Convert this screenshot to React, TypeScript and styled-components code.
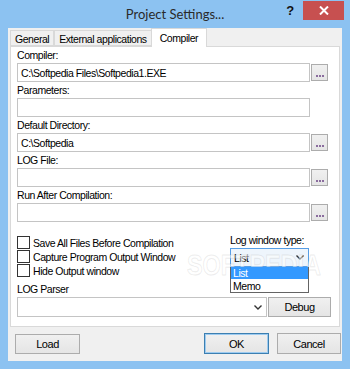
import React from "react";
import styled, { createGlobalStyle } from "styled-components";

const Global = createGlobalStyle`
  html, body { margin: 0; padding: 0; background: #8cc2f1; overflow: hidden; }
  * { box-sizing: border-box; }
  body { font-family: "Liberation Sans", Arial, sans-serif; font-size: 10.5px; letter-spacing: -0.45px; color: #000; }
`;

const Window = styled.div`
  width: 350px;
  height: 369px;
  background: #8cc2f1;
  display: flex;
  flex-direction: column;
  padding: 0 8px 8px 8px;
  overflow: hidden;
`;

const TitleBar = styled.div`
  position: relative;
  height: 28px;
  flex: none;
  display: flex;
  align-items: center;
  justify-content: center;
`;

const Title = styled.div`
  font-family: Lato, "Noto Sans", sans-serif;
  font-size: 13px;
  letter-spacing: 0;
  color: #2a2a2a;
  margin-top: -1px;
`;

const Caption = styled.div`
  position: absolute;
  right: -8px;
  top: 0;
  display: flex;
  align-items: flex-start;
`;

const HelpBtn = styled.div`
  width: 26px;
  height: 20px;
  display: flex;
  align-items: center;
  justify-content: center;
  font-family: "Liberation Sans", Arial, sans-serif;
  font-weight: bold;
  font-size: 13px;
  color: #111;
`;

const CloseBtn = styled.div`
  width: 41px;
  height: 19px;
  margin-right: 6px;
  margin-top: 1px;
  background: #c75050;
  display: flex;
  align-items: center;
  justify-content: center;
`;

const Client = styled.div`
  flex: 1;
  background: #f0f0f0;
  display: flex;
  flex-direction: column;
  padding: 2px 2px 0 2px;
`;

const TabStrip = styled.div`
  display: flex;
  align-items: flex-end;
  height: 16px;
  position: relative;
  z-index: 1;
`;

const Tab = styled.div<{ $active?: boolean }>`
  height: ${(p) => (p.$active ? "19px" : "16px")};
  padding: 0 ${(p) => (p.$active ? "8px" : "4px")};
  margin-left: ${(p) => (p.$active ? "-1px" : "0")};
  margin-bottom: ${(p) => (p.$active ? "-1px" : "0")};
  background: ${(p) => (p.$active ? "#fff" : "#f0f0f0")};
  border: 1px solid #d9d9d9;
  border-bottom: ${(p) => (p.$active ? "none" : "1px solid #d9d9d9")};
  & + & { border-left: ${(p) => (p.$active ? "1px solid #d9d9d9" : "none")}; }
  display: flex;
  align-items: center;
  padding-top: ${(p) => (p.$active ? "0" : "1px")};
  white-space: nowrap;
`;

const Panel = styled.div`
  background: #fff;
  border: 1px solid #d9d9d9;
  height: 281px;
  padding: 2px 0 0 6px;
  display: flex;
  flex-direction: column;
  gap: 2px;
  position: relative;
  overflow: hidden;
`;

const Field = styled.div<{ $top?: number }>`
  display: flex;
  flex-direction: column;
  gap: 1px;
  margin-top: ${(p) => p.$top ?? 0}px;
`;

const Label = styled.div`
  line-height: 13px;
  height: 13px;
  white-space: nowrap;
`;

const Row = styled.div`
  display: flex;
  align-items: center;
  gap: 1px;
`;

const TextBox = styled.div<{ $w?: number }>`
  width: ${(p) => p.$w ?? 293}px;
  height: 19px;
  border: 1px solid #c4c4c4;
  background: #fff;
  padding: 0 3px;
  display: flex;
  align-items: center;
  white-space: nowrap;
`;

const DotsBtn = styled.div`
  width: 17px;
  height: 17px;
  border: 1px solid #acacac;
  background: linear-gradient(#f0f0f0, #e5e5e5);
  display: flex;
  align-items: flex-end;
  justify-content: center;
  padding-bottom: 3px;
  gap: 1px;
`;

const Dot = styled.span`
  width: 2px;
  height: 2px;
  background: #8a6c9e;
`;

const Middle = styled.div`
  display: flex;
  margin-top: 10px;
`;

const Checks = styled.div`
  display: flex;
  flex-direction: column;
  gap: 1px;
  width: 213px;
  padding-top: 2px;
`;

const CheckRow = styled.div`
  display: flex;
  align-items: center;
  gap: 3px;
  height: 13px;
  white-space: nowrap;
`;

const Box = styled.div`
  width: 13px;
  height: 13px;
  border: 1px solid #333;
  background: #fff;
  flex: none;
`;

const LogType = styled.div`
  display: flex;
  flex-direction: column;
  position: relative;
`;

const LogLabel = styled.div`
  line-height: 12px;
  height: 14px;
  white-space: nowrap;
`;

const Select = styled.div`
  width: 79px;
  height: 19px;
  border: 1px solid #569de5;
  background: #eef5fc;
  display: flex;
  align-items: center;
  justify-content: space-between;
  padding: 0 4px 0 3px;
`;

const DropList = styled.div`
  position: absolute;
  top: 33px;
  left: 0;
  width: 79px;
  border: 1px solid #646464;
  border-top: none;
  background: #fff;
  z-index: 4;
  display: flex;
  flex-direction: column;
`;

const Item = styled.div<{ $sel?: boolean }>`
  height: 12px;
  line-height: 12px;
  padding-left: 2px;
  background: ${(p) => (p.$sel ? "#3399ff" : "#fff")};
  color: ${(p) => (p.$sel ? "#fff" : "#000")};
  & + & { margin-top: 1px; }
`;

const ParserRow = styled.div`
  display: flex;
  align-items: center;
  gap: 1px;
`;

const Combo = styled.div`
  width: 250px;
  height: 20px;
  border: 1px solid #c4c4c4;
  background: #fff;
  display: flex;
  align-items: center;
  justify-content: flex-end;
  padding-right: 4px;
`;

const Button = styled.div<{ $w?: number; $default?: boolean }>`
  width: ${(p) => p.$w ?? 65}px;
  height: ${(p) => (p.$default !== undefined ? 21 : 20)}px;
  border: 1px solid ${(p) => (p.$default ? "#3c7fb1" : "#acacac")};
  box-shadow: ${(p) => (p.$default ? "inset 0 0 0 1px #9dcbf0" : "none")};
  background: linear-gradient(#f0f0f0, #e5e5e5);
  display: flex;
  align-items: center;
  justify-content: center;
  flex: none;
  font-size: 11px;
`;

const Footer = styled.div`
  display: flex;
  align-items: center;
  padding: 6px 0 0 5px;
`;

const Spacer = styled.div`
  flex: 1;
`;

const FooterRight = styled.div`
  display: flex;
  gap: 8px;
  margin-right: -1px;
`;

const Watermark = styled.div`
  position: absolute;
  left: 176px;
  top: 201px;
  font-family: "Liberation Sans", Arial, sans-serif;
  font-weight: bold;
  font-size: 30px;
  letter-spacing: 0;
  transform: scaleX(0.78);
  transform-origin: left top;
  color: rgba(255, 255, 255, 0.5);
  -webkit-text-stroke: 1px rgba(170, 170, 170, 0.22);
  pointer-events: none;
  z-index: 3;
  white-space: nowrap;
`;

const Chevron = () => (
  <svg width="8" height="5" viewBox="0 0 8 5">
    <path d="M0.5 0.5 L4 4 L7.5 0.5" fill="none" stroke="#333" strokeWidth="1.4" />
  </svg>
);

const Dots = () => (
  <DotsBtn>
    <Dot />
    <Dot />
    <Dot />
  </DotsBtn>
);

export default function App() {
  return (
    <>
      <Global />
      <Window>
        <TitleBar>
          <Title>Project Settings...</Title>
          <Caption>
            <HelpBtn>?</HelpBtn>
            <CloseBtn>
              <svg width="10" height="9" viewBox="0 0 10 9">
                <path d="M1 0.5 L9 8.5 M9 0.5 L1 8.5" stroke="#fff" strokeWidth="2" />
              </svg>
            </CloseBtn>
          </Caption>
        </TitleBar>
        <Client>
          <TabStrip>
            <Tab>General</Tab>
            <Tab>External applications</Tab>
            <Tab $active>Compiler</Tab>
          </TabStrip>
          <Panel>
            <Field>
              <Label>Compiler:</Label>
              <Row>
                <TextBox>C:\Softpedia Files\Softpedia1.EXE</TextBox>
                <Dots />
              </Row>
            </Field>
            <Field>
              <Label>Parameters:</Label>
              <Row>
                <TextBox />
              </Row>
            </Field>
            <Field>
              <Label>Default Directory:</Label>
              <Row>
                <TextBox>C:\Softpedia</TextBox>
                <Dots />
              </Row>
            </Field>
            <Field>
              <Label>LOG File:</Label>
              <Row>
                <TextBox />
                <Dots />
              </Row>
            </Field>
            <Field>
              <Label>Run After Compilation:</Label>
              <Row>
                <TextBox />
                <Dots />
              </Row>
            </Field>
            <Middle>
              <Checks>
                <CheckRow>
                  <Box />
                  Save All Files Before Compilation
                </CheckRow>
                <CheckRow>
                  <Box />
                  Capture Program Output Window
                </CheckRow>
                <CheckRow>
                  <Box />
                  Hide Output window
                </CheckRow>
              </Checks>
              <LogType>
                <LogLabel>Log window type:</LogLabel>
                <Select>
                  <span>List</span>
                  <Chevron />
                </Select>
                <DropList>
                  <Item $sel>List</Item>
                  <Item>Memo</Item>
                </DropList>
              </LogType>
            </Middle>
            <Field $top={4}>
              <Label>LOG Parser</Label>
              <ParserRow>
                <Combo>
                  <Chevron />
                </Combo>
                <Button $w={63}>Debug</Button>
              </ParserRow>
            </Field>
            <Watermark>SOFTPEDIA</Watermark>
          </Panel>
          <Footer>
            <Button>Load</Button>
            <Spacer />
            <FooterRight>
              <Button $default>OK</Button>
              <Button $default={false} $w={64}>Cancel</Button>
            </FooterRight>
          </Footer>
        </Client>
      </Window>
    </>
  );
}
